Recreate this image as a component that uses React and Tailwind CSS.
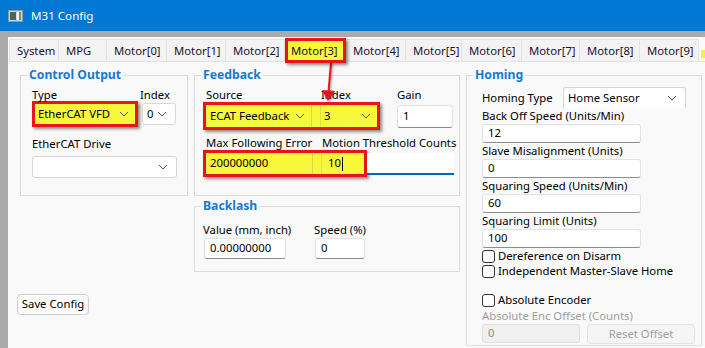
import React from "react";

function Chev() {
  return (
    <svg width="10" height="6" viewBox="0 0 10 6" className="shrink-0">
      <path d="M1 1l4 4 4-4" fill="none" stroke="#555" strokeWidth="1" />
    </svg>
  );
}

function Select({ w, h = 22, value, className = "" }) {
  return (
    <div
      className={`flex items-center justify-between bg-white border border-[#d6d6d6] rounded-[3px] pl-[4px] pr-[8px] shrink-0 ${className}`}
      style={{ width: w, height: h }}
    >
      <span className="text-[11.3px] text-black">{value}</span>
      <Chev />
    </div>
  );
}

function Input({ w, h = 20, value, className = "" }) {
  return (
    <div
      className={`flex items-center bg-white border border-[#e2e2e2] border-b-[#8c8c8c] rounded-[3px] pl-[5px] shrink-0 text-[11.3px] text-black ${className}`}
      style={{ width: w, height: h }}
    >
      {value}
    </div>
  );
}

function Label({ children, className = "" }) {
  return <div className={`text-[11.3px] leading-[12px] text-black whitespace-nowrap ${className}`}>{children}</div>;
}

function Legend({ children }) {
  return (
    <legend className="ml-[6px] px-[2px] text-[12.2px] leading-[16px] font-bold text-[#1779d3]">{children}</legend>
  );
}

function Check({ label }) {
  return (
    <div className="flex items-center h-[14px]">
      <div className="w-[13px] h-[13px] border border-[#333] rounded-[3px] bg-white shrink-0" />
      <span className="ml-[3px] text-[11.3px] leading-[14px] text-black whitespace-nowrap">{label}</span>
    </div>
  );
}

const tabs = [
  ["System", 50],
  ["MPG", 48],
  ["Motor[0]", 60],
  ["Motor[1]", 59],
  ["Motor[2]", 59],
  ["Motor[3]", 60, true],
  ["Motor[4]", 60],
  ["Motor[5]", 56],
  ["Motor[6]", 60],
  ["Motor[7]", 58],
  ["Motor[8]", 60],
  ["Motor[9]", 59],
];

export default function App() {
  return (
    <div className="relative w-[705px] h-[348px] overflow-hidden bg-[#aaaaaa] font-['Noto_Sans',sans-serif]">
      {/* title bar */}
      <div className="h-[31px] bg-[#0078d4] flex items-center pl-[8px]">
        <svg width="15" height="12" viewBox="0 0 15 12">
          <rect x="0.5" y="0.5" width="14" height="11" fill="#cfd6d6" stroke="#8b9b9b" />
          <rect x="2" y="2" width="6" height="8" fill="#3d6b5e" />
          <rect x="9" y="2" width="1.5" height="8" fill="#ffffff" />
          <rect x="11" y="2" width="2" height="8" fill="#7c8c8c" />
        </svg>
        <span className="ml-[8px] text-[11.6px] text-white leading-[16px]">M31 Config</span>
      </div>

      {/* content */}
      <div className="ml-[8px] mt-[6px] h-[311px] bg-[#f9f9f9]">
        {/* tabs */}
        <div className="pt-[2px] pl-[1px]">
          <div className="flex items-start h-[23px] border-b border-[#e3e3e3]">
            {tabs.map(([t, w, hl]) =>
              hl ? (
                <div
                  key={t}
                  className="relative z-10 -mt-[1px] h-[25px] shrink-0 border-[3px] border-[#e8141c] bg-[#f7f73c] shadow-[2px_2px_3px_rgba(0,0,0,0.45)] pl-[3px] text-[11.3px] leading-[19px] text-[#1d1030]"
                  style={{ width: w + 1 }}
                >
                  {t}
                </div>
              ) : (
                <div
                  key={t}
                  className="h-[22px] shrink-0 border-t border-r border-[#e3e3e3] first:border-l bg-[#f3f3f3] pl-[7px] text-[11.3px] leading-[22px] text-[#1d1030]"
                  style={{ width: w }}
                >
                  {t}
                </div>
              )
            )}
            <div className="ml-[2px] mt-[11px] w-[6px] h-[8px] bg-[#f3f33c]" />
          </div>
        </div>

        {/* body */}
        <div className="flex pl-[12px] pt-[5px]">
          {/* column 1 */}
          <div className="w-[168px] shrink-0 flex flex-col">
            <fieldset className="h-[129px] border border-[#dcdcdc]">
              <Legend>Control Output</Legend>
              <div className="pl-[11px] pt-[6px]">
                <div className="flex">
                  <div className="w-[106px] shrink-0">
                    <Label>Type</Label>
                    <div className="h-[26px] w-[106px] border-[3px] border-[#e8141c] bg-[#f7f73c] shadow-[2px_2px_3px_rgba(0,0,0,0.45)] flex items-center justify-between pl-[3px] pr-[6px]">
                      <span className="text-[11.3px] text-black">EtherCAT VFD</span>
                      <Chev />
                    </div>
                  </div>
                  <div className="ml-[2px]">
                    <Label>Index</Label>
                    <Select w={34} h={22} value="0" className="ml-[2px] mt-[2px] pr-[4px]" />
                  </div>
                </div>
                <Label className="mt-[11px]">EtherCAT Drive</Label>
                <Select w={145} h={22} value="" className="mt-[6px]" />
              </div>
            </fieldset>
            <div className="-ml-[3px] mt-[98px] w-[72px] h-[21px] border border-[#cfcfcf] rounded-[4px] bg-[#fdfdfd] flex items-center justify-center text-[11.3px] text-black whitespace-nowrap">
              Save Config
            </div>
          </div>

          {/* column 2 */}
          <div className="ml-[6px] w-[266px] shrink-0 flex flex-col">
            <fieldset className="h-[129px] border border-[#dcdcdc]">
              <Legend>Feedback</Legend>
              <div className="pl-[8px] pt-[6px]">
                <div className="flex">
                  <Label className="ml-[3px] w-[115px]">Source</Label>
                  <Label className="w-[76px]">Index</Label>
                  <Label>Gain</Label>
                </div>
                <div className="flex items-center mt-[1px]">
                  <div className="h-[28px] w-[177px] border-[3px] border-[#e8141c] bg-[#f7f73c] shadow-[2px_2px_3px_rgba(0,0,0,0.45)] flex items-stretch shrink-0">
                    <div className="w-[106px] flex items-center justify-between pl-[4px] pr-[6px] border-r border-[#d8d84a]">
                      <span className="text-[11.3px] text-black whitespace-nowrap">ECAT Feedback</span>
                      <Chev />
                    </div>
                    <div className="ml-[8px] flex-1 flex items-center justify-between pl-[3px] pr-[6px] border-l border-[#e2e24a]">
                      <span className="text-[11.3px] text-black">3</span>
                      <Chev />
                    </div>
                  </div>
                  <Input w={56} h={23} value="1" className="ml-[17px]" />
                </div>
                <div className="flex mt-[7px]">
                  <Label className="ml-[3px] w-[116px]">Max Following Error</Label>
                  <Label>Motion Threshold Counts</Label>
                </div>
                <div className="flex items-center mt-[1px]">
                  <div className="h-[27px] w-[164px] border-[3px] border-[#e8141c] bg-[#f7f73c] shadow-[2px_2px_3px_rgba(0,0,0,0.45)] flex items-stretch shrink-0">
                    <div className="w-[107px] flex items-center pl-[4px] border-r border-[#d8d84a] text-[11.3px] text-black">
                      200000000
                    </div>
                    <div className="ml-[8px] flex-1 flex items-center pl-[6px] border-l border-[#e2e24a] text-[11.3px] text-black">
                      10<span className="inline-block w-[1px] h-[14px] bg-black ml-[1px]" />
                    </div>
                  </div>
                  <div className="w-[87px] h-[22px] bg-white border-b-2 border-[#0067c0] shrink-0" />
                </div>
              </div>
            </fieldset>
            <fieldset className="mt-[2px] h-[74px] border border-[#dcdcdc]">
              <Legend>Backlash</Legend>
              <div className="pl-[8px] pt-[10px]">
                <div className="flex">
                  <Label className="w-[111px]">Value (mm, inch)</Label>
                  <Label>Speed (%)</Label>
                </div>
                <div className="flex mt-[2px]">
                  <Input w={82} h={21} value="0.00000000" className="ml-[1px]" />
                  <Input w={50} h={21} value="0" className="ml-[29px]" />
                </div>
              </div>
            </fieldset>
          </div>

          {/* column 3 */}
          <div className="ml-[6px] w-[236px] shrink-0">
            <fieldset className="h-[279px] border border-[#dcdcdc]">
              <Legend>Homing</Legend>
              <div className="pl-[15px] pt-[4px]">
                <div className="flex items-center">
                  <div className="w-[81px] text-[11.3px] leading-[14px] text-black whitespace-nowrap">Homing Type</div>
                  <Select w={123} h={21} value="Home Sensor" className="pr-[4px] border-b-0 rounded-b-none" />
                </div>
                <div className="text-[11.3px] leading-[14px] text-black mt-[1px] whitespace-nowrap">Back Off Speed (Units/Min)</div>
                <Input w={159} h={19} value="12" className="mt-[1px]" />
                <div className="text-[11.3px] leading-[14px] text-black mt-[1px] whitespace-nowrap">Slave Misalignment (Units)</div>
                <Input w={159} h={19} value="0" className="mt-[1px]" />
                <div className="text-[11.3px] leading-[14px] text-black mt-[1px] whitespace-nowrap">Squaring Speed (Units/Min)</div>
                <Input w={159} h={19} value="60" className="mt-[1px]" />
                <div className="text-[11.3px] leading-[14px] text-black mt-[1px] whitespace-nowrap">Squaring Limit (Units)</div>
                <Input w={159} h={19} value="100" className="mt-[1px]" />
                <div className="mt-[1px]">
                  <Check label="Dereference on Disarm" />
                </div>
                <div className="mt-[1px]">
                  <Check label="Independent Master-Slave Home" />
                </div>
                <div className="mt-[15px]">
                  <Check label="Absolute Encoder" />
                </div>
                <div className="text-[11.3px] leading-[14px] text-[#a0a0a0] mt-[2px] whitespace-nowrap">Absolute Enc Offset (Counts)</div>
                <div className="flex mt-[1px]">
                  <div className="w-[98px] h-[19px] bg-[#f0f0f0] border border-[#e0e0e0] rounded-[3px] pl-[5px] flex items-center text-[11.3px] text-[#8a8a8a] shrink-0">
                    0
                  </div>
                  <div className="ml-[7px] w-[108px] h-[20px] bg-[#f5f5f5] border border-[#e3e3e3] rounded-[4px] flex items-center justify-center text-[11.3px] text-[#a0a0a0] shrink-0">
                    Reset Offset
                  </div>
                </div>
              </div>
            </fieldset>
          </div>
        </div>
      </div>

      {/* red annotation arrow */}
      <svg className="absolute left-[316px] top-[60px] pointer-events-none" width="26" height="46" viewBox="0 0 26 46">
        <g style={{ filter: "drop-shadow(1px 1px 1px rgba(0,0,0,0.4))" }}>
          <line x1="15" y1="3" x2="12.5" y2="32" stroke="#e8141c" strokeWidth="2" />
          <polygon points="6,30 19,31 12,41" fill="#e8141c" />
        </g>
      </svg>
    </div>
  );
}
